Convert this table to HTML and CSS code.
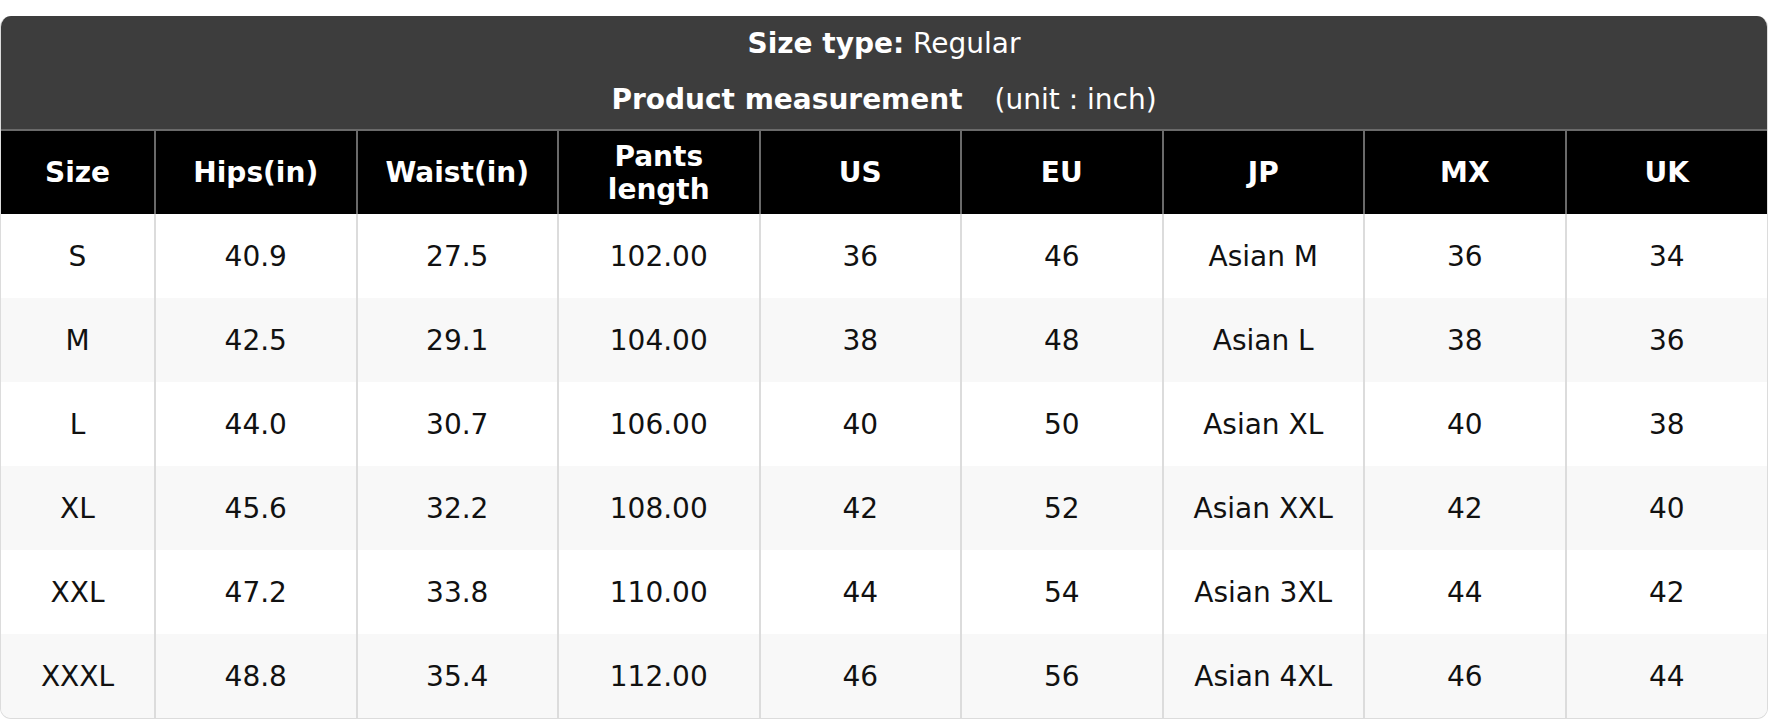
FILE: index.html
```html
<!DOCTYPE html>
<html lang="en">
<head>
<meta charset="utf-8">
<title>Size chart</title>
<link rel="stylesheet" href="styles.css">
</head>
<body>
<div class="card">
  <div class="title">
    <p class="line"><b>Size type:</b> Regular</p>
    <p class="line"><b>Product measurement</b><span class="unit">(unit : inch)</span></p>
  </div>
  <table class="chart">
    <colgroup>
      <col class="c-size">
      <col><col><col><col><col><col><col><col>
    </colgroup>
    <thead>
      <tr>
        <th>Size</th><th>Hips(in)</th><th>Waist(in)</th><th>Pants<br>length</th><th>US</th><th>EU</th><th>JP</th><th>MX</th><th>UK</th>
      </tr>
    </thead>
    <tbody>
      <tr><td>S</td><td>40.9</td><td>27.5</td><td>102.00</td><td>36</td><td>46</td><td>Asian M</td><td>36</td><td>34</td></tr>
      <tr><td>M</td><td>42.5</td><td>29.1</td><td>104.00</td><td>38</td><td>48</td><td>Asian L</td><td>38</td><td>36</td></tr>
      <tr><td>L</td><td>44.0</td><td>30.7</td><td>106.00</td><td>40</td><td>50</td><td>Asian XL</td><td>40</td><td>38</td></tr>
      <tr><td>XL</td><td>45.6</td><td>32.2</td><td>108.00</td><td>42</td><td>52</td><td>Asian XXL</td><td>42</td><td>40</td></tr>
      <tr><td>XXL</td><td>47.2</td><td>33.8</td><td>110.00</td><td>44</td><td>54</td><td>Asian 3XL</td><td>44</td><td>42</td></tr>
      <tr><td>XXXL</td><td>48.8</td><td>35.4</td><td>112.00</td><td>46</td><td>56</td><td>Asian 4XL</td><td>46</td><td>44</td></tr>
    </tbody>
  </table>
</div>
</body>
</html>
```

FILE: styles.css
```css
html, body {
  margin: 0;
  padding: 0;
  background: #fff;
}

body {
  font-family: "DejaVu Sans", "Liberation Sans", sans-serif;
  font-size: 28px;
  color: #111;
}

.card {
  margin-top: 16px;
  width: 1768px;
  border: 1px solid #dcdcdc;
  border-top: none;
  border-radius: 11px;
  overflow: hidden;
  box-sizing: border-box;
}

.title {
  background: #3d3d3d;
  color: #fff;
  padding: 11px 0 12px;
  display: flex;
  flex-direction: column;
  align-items: center;
  gap: 22px;
  border-bottom: 2px solid #6a6a6a;
}

.line {
  margin: 0;
  line-height: 34px;
  white-space: nowrap;
}

.unit {
  margin-left: 32px;
}

.chart {
  width: 100%;
  border-collapse: collapse;
  table-layout: fixed;
}

.c-size {
  width: 154px;
}

.chart th,
.chart td {
  text-align: center;
  vertical-align: middle;
  padding: 0 6px;
  height: 84px;
  box-sizing: border-box;
}

.chart th {
  background: #000;
  color: #fff;
  font-weight: bold;
  line-height: 33px;
  height: 83px;
  border-left: 2px solid #6a6a6a;
}

.chart td {
  padding-top: 1px;
  border-left: 2px solid #dcdcdc;
  line-height: 34px;
}

.chart th:first-child,
.chart td:first-child {
  border-left: none;
}

.chart tbody tr:nth-child(even) td {
  background: #f8f8f8;
}
```
